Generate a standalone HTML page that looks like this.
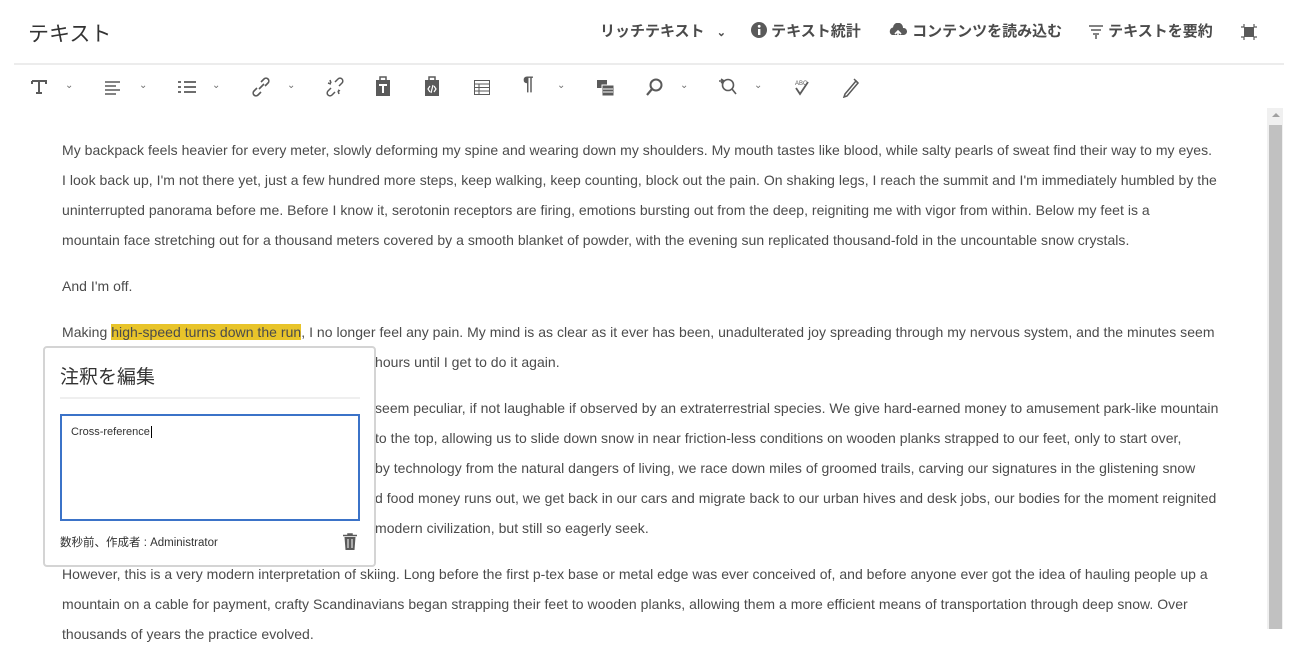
<!DOCTYPE html>
<html><head><meta charset="utf-8"><style>
*{box-sizing:border-box;margin:0;padding:0}
body{width:1294px;height:629px;overflow:hidden;background:#fff;font-family:"Liberation Sans","Noto Sans CJK JP",sans-serif;color:#4b4b4b;position:relative}
.title{position:absolute;left:28px;top:18px;font-size:21px;color:#323232;font-weight:normal}
.act{position:absolute;top:20px;font-size:15px;font-weight:bold;color:#4b4b4b;white-space:nowrap}
.hr{position:absolute;left:14px;top:63px;width:1270px;height:2px;background:#ececec}
.tb{position:absolute;top:76px;height:22px}
.car{position:absolute;top:80px;font-size:10px;color:#707070}
.txt{position:absolute;left:62px;top:135px;width:1200px;font-size:14px;line-height:30px;color:#4b4b4b;white-space:nowrap;letter-spacing:0.03px}
.txt p{margin-bottom:16px}
.h{display:inline-block;width:313px;overflow:hidden;vertical-align:top}
.hl{background:#e8c42a}
.sb{position:absolute;left:1267px;top:108px;width:16px;height:521px;background:#f0f0f0}
.th{position:absolute;left:1269px;top:125px;width:13px;height:504px;background:#c1c1c1}
.pop{position:absolute;left:43px;top:346px;width:333px;height:221px;background:#fff;border:2px solid #d4d4d4;border-radius:4px}
.pop h3{position:absolute;left:15px;top:14px;font-size:19px;font-weight:normal;color:#323232}
.pop .line{position:absolute;left:15px;top:49px;width:300px;height:2px;background:#efefef}
.ta{position:absolute;left:15px;top:66px;width:300px;height:107px;border:2px solid #3b73c8;font-size:11px;padding:10px 9px;color:#323232}
.meta{position:absolute;left:15px;top:186px;font-size:11.5px;color:#323232}
</style></head><body>
<div class="title">テキスト</div>
<div class="act" style="left:600px">リッチテキスト <span style="font-size:11px;margin-left:8px">⌄</span></div>
<div class="act" style="left:751px"><svg width="16" height="16" style="vertical-align:-2px" viewBox="0 0 16 16"><circle cx="8" cy="8" r="8" fill="#5a5a5a"/><rect x="7" y="7" width="2.4" height="6" fill="#fff"/><circle cx="8.2" cy="4.3" r="1.4" fill="#fff"/></svg> テキスト統計</div>
<div class="act" style="left:888px"><svg width="20" height="16" style="vertical-align:-3px" viewBox="0 0 20 16"><path d="M4 12a4 4 0 0 1 1-7.5A5 5 0 0 1 15 5a3.5 3.5 0 0 1 1 7z" fill="#5a5a5a"/><path d="M10 16V8M7 11l3-3 3 3" stroke="#fff" stroke-width="1.6" fill="none"/></svg> コンテンツを読み込む</div>
<div class="act" style="left:1088px"><svg width="16" height="16" style="vertical-align:-3px" viewBox="0 0 16 16"><path d="M1 3h14M3 7h10M5 11h6M8 12v4" stroke="#5a5a5a" stroke-width="1.5"/></svg> テキストを要約</div>
<svg style="position:absolute;left:1240px;top:23px" width="18" height="18" viewBox="0 0 18 18"><rect x="4" y="4" width="10" height="10" fill="#5a5a5a"/><path d="M1 4h3V1M14 1v3h3M1 14h3v3M14 17v-3h3" stroke="#5a5a5a" stroke-width="1.2" fill="none"/></svg>
<div class="hr"></div>
<svg class="tb" style="left:30px" width="18" height="22" viewBox="0 0 18 22"><path d="M2 5h14v3M2 5v3M9 5v12M6 17h6" stroke="#5a5a5a" stroke-width="2" fill="none"/></svg><span class="car" style="left:65px">⌄</span>
<svg class="tb" style="left:105px" width="16" height="22" viewBox="0 0 16 22"><path d="M0 6h15M0 10h11M0 14h15M0 18h11" stroke="#5a5a5a" stroke-width="1.6"/></svg><span class="car" style="left:139px">⌄</span>
<svg class="tb" style="left:178px" width="18" height="22" viewBox="0 0 18 22"><path d="M0 6h3M6 6h12M0 11h3M6 11h12M0 16h3M6 16h12" stroke="#5a5a5a" stroke-width="1.8"/></svg><span class="car" style="left:212px">⌄</span>
<svg class="tb" style="left:251px" width="20" height="22" viewBox="0 0 20 22"><path d="M8 13l5-5M6 12l-3 3a2.5 2.5 0 0 0 4 4l3-3M14 10l3-3a2.5 2.5 0 0 0-4-4l-3 3" stroke="#5a5a5a" stroke-width="1.6" fill="none"/></svg><span class="car" style="left:287px">⌄</span>
<svg class="tb" style="left:325px" width="20" height="22" viewBox="0 0 20 22"><path d="M6 12l-3 3a2.5 2.5 0 0 0 4 4l3-3M14 10l3-3a2.5 2.5 0 0 0-4-4l-3 3M3 7l3 1M5 4l1 3M15 15l-2-1M14 18l-1-3" stroke="#5a5a5a" stroke-width="1.5" fill="none"/></svg>
<svg class="tb" style="left:376px" width="14" height="22" viewBox="0 0 14 22"><rect x="0" y="4" width="14" height="16" fill="#5a5a5a"/><rect x="4" y="1" width="6" height="4" fill="none" stroke="#5a5a5a" stroke-width="1.5"/><path d="M3 9h8M7 9v8" stroke="#fff" stroke-width="2"/></svg>
<svg class="tb" style="left:425px" width="14" height="22" viewBox="0 0 14 22"><rect x="0" y="4" width="14" height="16" fill="#5a5a5a"/><rect x="4" y="1" width="6" height="4" fill="none" stroke="#5a5a5a" stroke-width="1.5"/><path d="M5 10l-2 3 2 3M9 10l2 3-2 3M8 9l-2 8" stroke="#fff" stroke-width="1.2" fill="none"/></svg>
<svg class="tb" style="left:474px" width="16" height="22" viewBox="0 0 16 22"><rect x="0.5" y="4.5" width="15" height="14" fill="none" stroke="#5a5a5a"/><path d="M0 8h16M0 11.5h16M0 15h16M5 8v11" stroke="#5a5a5a"/></svg>
<div class="tb" style="left:523px;font-size:19px;font-weight:bold;color:#5a5a5a;top:74px">¶</div><span class="car" style="left:557px">⌄</span>
<svg class="tb" style="left:597px" width="18" height="22" viewBox="0 0 18 22"><rect x="0" y="4" width="10" height="8" fill="#5a5a5a"/><rect x="5" y="9" width="12" height="11" fill="#5a5a5a" stroke="#fff"/><path d="M6 13h10M6 16h10" stroke="#fff"/></svg>
<svg class="tb" style="left:645px" width="18" height="22" viewBox="0 0 18 22"><circle cx="11" cy="9" r="5.5" stroke="#5a5a5a" stroke-width="2" fill="none"/><path d="M7 13l-5 6" stroke="#5a5a5a" stroke-width="2.2"/></svg><span class="car" style="left:680px">⌄</span>
<svg class="tb" style="left:718px" width="20" height="22" viewBox="0 0 20 22"><circle cx="10" cy="9" r="5.5" stroke="#5a5a5a" stroke-width="1.6" fill="none"/><path d="M14 13l4 5M1 5h5M3 3l3 2-3 2" stroke="#5a5a5a" stroke-width="1.6" fill="none"/></svg><span class="car" style="left:754px">⌄</span>
<svg class="tb" style="left:794px" width="18" height="22" viewBox="0 0 18 22"><text x="1" y="9" font-size="6" font-family="Liberation Sans" fill="#5a5a5a">ABC</text><path d="M2 12l4 6 8-12" stroke="#5a5a5a" stroke-width="1.8" fill="none"/></svg>
<svg class="tb" style="left:842px" width="18" height="22" viewBox="0 0 18 22"><path d="M3 18l11-13 2 2-11 13-3 1z" stroke="#5a5a5a" stroke-width="1.5" fill="none"/><path d="M12 3l4 4" stroke="#5a5a5a" stroke-width="1.5"/></svg>

<div class="txt">
<p>My backpack feels heavier for every meter, slowly deforming my spine and wearing down my shoulders. My mouth tastes like blood, while salty pearls of sweat find their way to my eyes.<br>I look back up, I'm not there yet, just a few hundred more steps, keep walking, keep counting, block out the pain. On shaking legs, I reach the summit and I'm immediately humbled by the<br>uninterrupted panorama before me. Before I know it, serotonin receptors are firing, emotions bursting out from the deep, reigniting me with vigor from within. Below my feet is a<br>mountain face stretching out for a thousand meters covered by a smooth blanket of powder, with the evening sun replicated thousand-fold in the uncountable snow crystals.</p>
<p>And I'm off.</p>
<p>Making <span class="hl">high-speed turns down the run</span>, I no longer feel any pain. My mind is as clear as it ever has been, unadulterated joy spreading through my nervous system, and the minutes seem<br><span class="h">like seconds. It will be many</span>hours until I get to do it again.</p>
<p><span class="h">Seen from the outside, our ways of life</span>seem peculiar, if not laughable if observed by an extraterrestrial species. We give hard-earned money to amusement park-like mountain<br><span class="h">resorts that haul us on cable cars</span>to the top, allowing us to slide down snow in near friction-less conditions on wooden planks strapped to our feet, only to start over,<br><span class="h">again and again. Safeguarded</span>by technology from the natural dangers of living, we race down miles of groomed trails, carving our signatures in the glistening snow<br><span class="h">and when the vacation an</span>d food money runs out, we get back in our cars and migrate back to our urban hives and desk jobs, our bodies for the moment reignited<br><span class="h">with the thrill we lost to</span>modern civilization, but still so eagerly seek.</p>
<p>However, this is a very modern interpretation of skiing. Long before the first p-tex base or metal edge was ever conceived of, and before anyone ever got the idea of hauling people up a<br>mountain on a cable for payment, crafty Scandinavians began strapping their feet to wooden planks, allowing them a more efficient means of transportation through deep snow. Over<br>thousands of years the practice evolved.</p>
</div>
<div class="sb"></div><div class="th"></div>
<div style="position:absolute;left:1272px;top:113px;width:0;height:0;border:4px solid transparent;border-bottom:4px solid #a0a0a0;border-top:0"></div>

<div class="pop">
<h3>注釈を編集</h3>
<div class="line"></div>
<div class="ta">Cross-reference<span style="border-left:1px solid #000;margin-left:1px"></span></div>
<div class="meta">数秒前、作成者 : Administrator</div>
<svg style="position:absolute;left:298px;top:185px" width="14" height="17" viewBox="0 0 14 17"><path d="M0 2.5h14M5 2.5V1h4v1.5" stroke="#5a5a5a" stroke-width="1.5" fill="none"/><path d="M1.5 4h11l-1 13h-9z" fill="#5a5a5a"/><path d="M5 6v9M9 6v9" stroke="#fff"/></svg>
</div>
</body></html>
